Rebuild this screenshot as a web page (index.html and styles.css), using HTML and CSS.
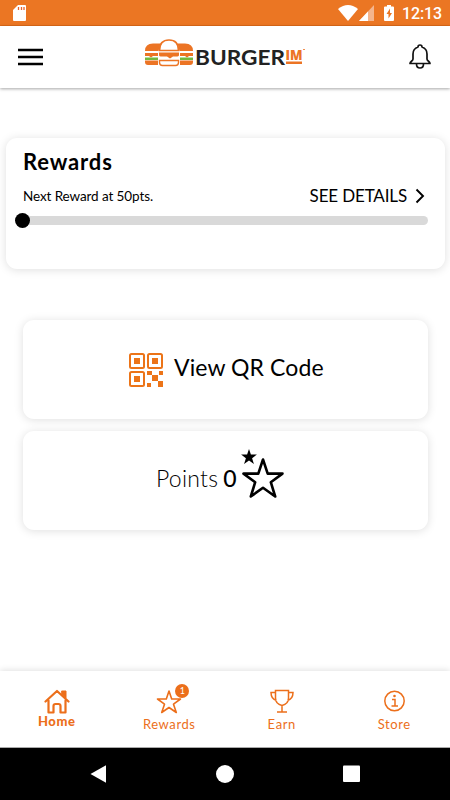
FILE: index.html
```
<!DOCTYPE html>
<html lang="en">
<head>
<meta charset="utf-8">
<title>Burgerim</title>
<link rel="stylesheet" href="styles.css">
</head>
<body>
<div class="screen">
  <div class="status">
    <svg class="sd" width="14" height="17" viewBox="0 0 14 17"><path d="M5 0h7a1 1 0 0 1 1 1v14a1 1 0 0 1-1 1H1a1 1 0 0 1-1-1V5z" fill="#fff"/><path d="M5.500 2v3M8.500 2v3M11 2v3" stroke="#e9642b" stroke-width="1.300"/></svg>
    <div class="status-right">
      <svg width="20" height="16" viewBox="0 0 20 16"><path d="M0 4Q10-4 20 4L10 16z" fill="#fff"/></svg>
      <svg width="15" height="16" viewBox="0 0 15 16"><path d="M15 0v16H0z" fill="#f4b58d"/><path d="M9 6.400V16H0z" fill="#fff"/></svg>
      <svg class="batt" width="10" height="16" viewBox="0 0 10 16"><path d="M3 0h4v1.500h2a1 1 0 0 1 1 1V15a1 1 0 0 1-1 1H1a1 1 0 0 1-1-1V2.500a1 1 0 0 1 1-1h2z" fill="#fff"/><path d="M6 3.500L2.500 9h2v4.500L8 8H6z" fill="#eb7623"/></svg>
      <span class="clock">12:13</span>
    </div>
  </div>
  <header class="header">
    <svg width="25" height="18" viewBox="0 0 25 18"><path d="M0 2h25M0 9h25M0 16h25" stroke="#000" stroke-width="2.700"/></svg>
    <svg class="logo" width="162" height="30" viewBox="0 0 162 30">
      <g fill="#ec7424">
        <path d="M1 12q0-7.500 8-7.500h7.500l-2 7.500zM49 12q0-7.500-8-7.500h-7.500l2 7.500z"/>
        <path d="M1 14h13v3H9l-2 1.500L5 17H1zM49 14H36v3h5l2 1.500 2-1.500h4z"/>
        <path d="M1 21.500h13V26H4q-3 0-3-3zM49 21.500H36V26h10q3 0 3-3z"/>
        <path d="M15 13.500h20V16q0 1.500-3 1.500h-3l-3 2-3-2h-5q-3 0-3-1.500z"/>
      </g>
      <path d="M1 18.500h13v2.500H1zM36 18.500h13v2.500H36z" fill="#72b83f"/>
      <path d="M15.500 11.500Q15.500 1 25 1t9.500 10.500z" fill="#fff" stroke="#ec7424" stroke-width="1.700"/>
      <path d="M15.500 21.500h19v2q0 3-3 3h-13q-3 0-3-3z" fill="#fff" stroke="#ec7424" stroke-width="1.400"/>
      <text class="brand" x="51" y="25.500" textLength="90" lengthAdjust="spacingAndGlyphs">BURGER</text>
      <text class="brand-im" x="141.500" y="20.500" textLength="17" lengthAdjust="spacingAndGlyphs">IM</text>
      <path d="M142 22.500h16v2.500h-16z" fill="#ec7424"/>
      <path d="M159 10.500h2" stroke="#ec7424" stroke-width=".8"/>
    </svg>
    <svg class="bell" width="22" height="26" viewBox="0 0 22 26" fill="none" stroke="#111" stroke-width="1.700" stroke-linejoin="round"><path d="M9 3q0-2 2-2t2 2c3 1 5 4 5 7v5c0 2 3 2.500 3 4.500H1c0-2 3-2.500 3-4.500v-5c0-3 2-6 5-7zM7.500 20q0 4 3.500 4t3.500-4"/></svg>
  </header>
  <main class="main">
    <section class="card rewards">
      <h1>Rewards</h1>
      <div class="row">
        <span class="next">Next Reward at 50pts.</span>
        <span class="details">SEE DETAILS</span>
        <svg class="chev" width="10" height="16" viewBox="0 0 10 16"><path d="M1.500 1.500L8 8l-6.500 6.500" fill="none" stroke="#000" stroke-width="1.900"/></svg>
      </div>
      <div class="track"><i class="knob"></i></div>
    </section>
    <section class="card tile qr">
      <svg width="34" height="34" viewBox="0 0 34 34"><g fill="#fff" stroke="#ec7418" stroke-width="2"><rect x="1" y="1" width="14" height="14" rx="1.500"/><rect x="19" y="1" width="14" height="14" rx="1.500"/><rect x="1" y="19" width="14" height="14" rx="1.500"/></g><path d="M5 5h6v6H5zM23 5h6v6h-6zM5 23h6v6H5zM18 18h5v4h-5zM30 18h4v4h-4zM23 22h6v6h-6zM18 30h4v4h-4zM29 28h5v6h-5z" fill="#ec7418"/></svg>
      <span class="view">View QR Code</span>
    </section>
    <section class="card tile points">
      <span class="pts">Points</span><span class="zero">0</span>
      <svg class="stars" width="44" height="50" viewBox="0 0 44 50"><path d="M8 0l1.900 5.600h6L11.100 9.200l1.800 5.800L8 11.500 3.100 15l1.800-5.800L.1 5.600h6z"/><path d="M22 10.500l4.700 14.100H41.500L29.800 33.200 34.200 47.500 22 38.800 9.800 47.500 14.200 33.200 2.500 24.600H17.300z" fill="none" stroke="#000" stroke-width="2.600" stroke-linejoin="round"/></svg>
    </section>
  </main>
  <nav class="tabs">
    <div class="tab home">
      <svg width="26" height="25" viewBox="0 0 26 25" fill="none" stroke="#ec6f1b" stroke-width="2.200" stroke-linejoin="round" stroke-linecap="round"><path d="M1.500 12.500L13 2 24.500 12.500M4.500 11.500v12h5V17q0-2 2-2h3q2 0 2 2v6.500h5V11.500"/><path d="M18 2h4v7l-4-3.500z" fill="#ec6f1b" stroke-width="1"/></svg>
      <span>Home</span>
    </div>
    <div class="tab">
      <div class="badged"><svg width="26" height="25" viewBox="0 0 26 25"><path d="M13 2l2.700 8H24.500l-7 5.200 2.800 8.300L13 18.500l-7.300 5 2.800-8.300-7-5.200h8.800z" fill="none" stroke="#ec6f1b" stroke-width="1.600" stroke-linejoin="round"/></svg><b class="badge">1</b></div>
      <span>Rewards</span>
    </div>
    <div class="tab">
      <svg width="26" height="25" viewBox="0 0 26 25" fill="none" stroke="#ec6f1b" stroke-width="1.500"><path d="M6.500 1.500h13V9q0 6-6.500 7.500-6.500-1.500-6.500-7.500zM6.500 3.500h-4.500q0 6.500 5.500 8M19.500 3.500H24q0 6.500-5.500 8M13 16.500V23M8 23h10"/></svg>
      <span>Earn</span>
    </div>
    <div class="tab">
      <svg width="26" height="25" viewBox="0 0 26 25" fill="none" stroke="#ec6f1b" stroke-width="1.500"><circle cx="13.500" cy="12" r="9.700"/><path d="M11 10.500H14V17M10.500 17h6.500"/><circle cx="13.500" cy="7" r="1.300" fill="#ec6f1b" stroke="none"/></svg>
      <span>Store</span>
    </div>
  </nav>
  <div class="system">
    <svg width="450" height="52" viewBox="0 0 450 52" fill="#fff"><path d="M90.500 26L106 17.300v17.400z"/><circle cx="225" cy="26" r="9"/><rect x="343" y="17.500" width="17" height="16.500" rx="1"/></svg>
  </div>
</div>
</body>
</html>
```
FILE: styles.css
```
* { box-sizing: border-box; }
body { margin: 0; background: #fff; font-family: Lato, sans-serif; color: #000; }
.screen { width: 450px; height: 800px; display: flex; flex-direction: column; overflow: hidden; }
svg { display: block; flex: none; }
.status { height: 26px; flex: none; background: #eb7623; border-bottom: 1px solid #df6a18; display: flex; justify-content: space-between; padding: 5px 9px 0 13px; }
.status-right { display: flex; }
.status-right svg + svg { margin-left: 1px; }
.status-right .batt { margin-left: 10px; }
.clock { font: 500 16px/18px Roboto, sans-serif; color: #fff; margin-left: 8px; width: 39px; letter-spacing: -.1px; white-space: nowrap; }
.header { height: 62px; flex: none; display: flex; align-items: center; justify-content: space-between; padding: 0 19px 0 18px; background: #fff; box-shadow: 0 1px 3px rgba(0,0,0,.35); }
.logo { margin: -7px 3px 0 0; }
.bell { margin-top: -1px; }
.brand { font: 700 20px Lato, sans-serif; fill: #222; }
.brand-im { font: 800 14px "Open Sans", sans-serif; fill: #ec7424; }
.main { flex: 1; padding: 50px 5px 0 6px; }
.card { background: #fff; border-radius: 11px; box-shadow: 0 1px 10px rgba(0,0,0,.13); }
.rewards { height: 131px; padding: 10px 17px 0; }
h1 { margin: 0; font-size: 22px; line-height: 28px; font-weight: 700; letter-spacing: .85px; }
.row { display: flex; align-items: center; height: 38px; padding-top: 2px; }
.next { flex: 1; font-size: 13.500px; letter-spacing: -.1px; white-space: nowrap; }
.details { font-size: 17px; letter-spacing: -.15px; margin-top: -2px; white-space: nowrap; }
.chev { margin: 0 3px 0 8px; }
.track { height: 9px; margin-top: 2px; border-radius: 5px; background: #d9d9d9; display: flex; align-items: center; }
.knob { width: 15px; height: 15px; margin-left: -8px; border-radius: 50%; background: #000; flex: none; }
.tile { height: 99px; margin: 51px 17px 0; display: flex; align-items: center; }
.qr { padding-left: 106px; }
.view { font-size: 23px; letter-spacing: .1px; margin-left: 11px; margin-top: -6px; }
.points { margin-top: 12px; padding-left: 133px; font-size: 23px; }
.pts { font-weight: 300; letter-spacing: .25px; margin-top: -5px; }
.zero { margin: -5px 0 0 5px; font-weight: 500; }
.stars { margin: -13px 0 0 4px; }
.tabs { height: 77px; flex: none; display: grid; grid-template-columns: repeat(4, 1fr); padding-top: 18px; background: #fff; box-shadow: 0 -1px 6px rgba(0,0,0,.12); border-bottom: 1px solid #aaa; color: #ec6f1b; }
.tab { display: flex; flex-direction: column; align-items: center; font-size: 13px; line-height: 16px; letter-spacing: .6px; padding-left: 1px; }
.tab span { margin-top: 2px; }
.home span { margin-top: -1px; font-weight: 900; }
.badged { position: relative; }
.badge { position: absolute; left: 19px; top: -5px; width: 14px; height: 14px; border-radius: 50%; background: #ec6f1b; color: #fff; font-size: 9px; line-height: 14px; text-align: center; font-weight: 400; letter-spacing: 0; }
.system { height: 52px; flex: none; background: #000; }
```
